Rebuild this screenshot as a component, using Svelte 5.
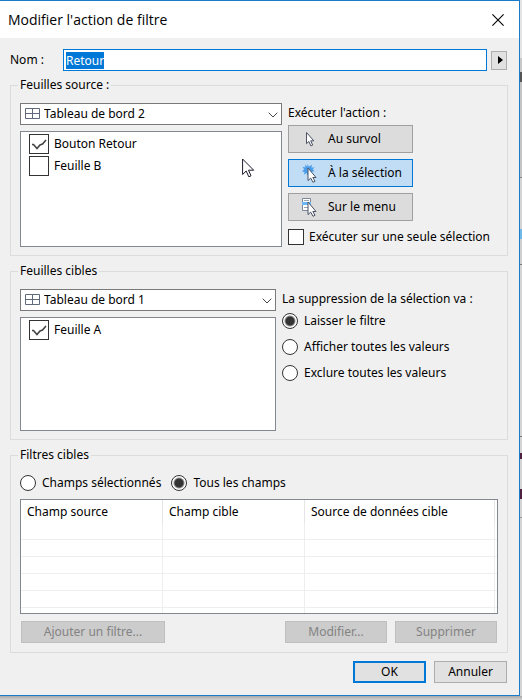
<script lang="ts">
    import { onMount } from "svelte";

    let name = "Retour";
    let sourceDashboard = "Tableau de bord 2";
    let targetDashboard = "Tableau de bord 1";
    let runOn = "select";
    let singleOnly = false;
    let clearing = "Laisser le filtre";
    let fieldMode = "Tous les champs";
    let nameInput: HTMLInputElement;

    let sourceSheets = [
        { label: "Bouton Retour", checked: true },
        { label: "Feuille B", checked: false },
    ];
    let targetSheets = [{ label: "Feuille A", checked: true }];

    const triggers = [
        { id: "hover", label: "Au survol" },
        { id: "select", label: "À la sélection" },
        { id: "menu", label: "Sur le menu" },
    ];
    const clearingOptions = [
        "Laisser le filtre",
        "Afficher toutes les valeurs",
        "Exclure toutes les valeurs",
    ];
    const fieldModes = ["Champs sélectionnés", "Tous les champs"];
    const emptyRows = [1, 2, 3, 4, 5, 6];

    onMount(() => {
        nameInput.focus();
        nameInput.select();
    });
</script>

{#snippet gridIcon()}
    <svg class="grid-icon" width="15" height="12" viewBox="0 0 15 12">
        <path d="M.5.5h14v10H.5zM7.5.5v10M.5 5.5h14" />
    </svg>
{/snippet}

{#snippet chevron()}
    <svg class="chevron" width="10" height="6" viewBox="0 0 10 6">
        <path d="M.7.7L5 5 9.3.7" />
    </svg>
{/snippet}

<div class="desktop">
    <main class="dialog">
        <header class="title-bar">
            <h1>Modifier l'action de filtre</h1>
            <button class="close" aria-label="Fermer">
                <svg width="12" height="12" viewBox="0 0 12 12">
                    <path d="M.4.4l11.2 11.2M11.6.4L.4 11.6" />
                </svg>
            </button>
        </header>

        <div class="body">
            <div class="name-row">
                <label for="name">Nom :</label>
                <input
                    id="name"
                    type="text"
                    bind:value={name}
                    bind:this={nameInput}
                />
                <button class="insert" aria-label="Insérer">
                    <svg width="5" height="8" viewBox="0 0 5 8">
                        <path d="M0 0l5 4-5 4z" />
                    </svg>
                </button>
            </div>

            <fieldset>
                <legend>Feuilles source :</legend>
                <div class="columns">
                    <div class="sheets">
                        <div class="combo">
                            {@render gridIcon()}
                            <select
                                aria-label="Source"
                                bind:value={sourceDashboard}
                            >
                                <option>Tableau de bord 1</option>
                                <option>Tableau de bord 2</option>
                            </select>
                            {@render chevron()}
                        </div>
                        <div class="list source-list">
                            {#each sourceSheets as sheet}
                                <label class="sheet">
                                    <input
                                        type="checkbox"
                                        bind:checked={sheet.checked}
                                    />
                                    {sheet.label}
                                </label>
                            {/each}
                            <svg
                                class="pointer"
                                width="13"
                                height="20"
                                viewBox="0 0 13 20"
                            >
                                <path
                                    d="M.6 1v15.5L4.2 13l2.6 5.8 2.2-1-2.5-5.6h5.2z"
                                />
                            </svg>
                        </div>
                    </div>

                    <div class="actions">
                        <span class="caption">Exécuter l'action :</span>
                        <div class="triggers">
                            {#each triggers as trigger}
                                <button
                                    class="trigger"
                                    class:active={runOn === trigger.id}
                                    aria-pressed={runOn === trigger.id}
                                    on:click={() => (runOn = trigger.id)}
                                >
                                    <svg
                                        width="16"
                                        height="20"
                                        viewBox="0 0 16 20"
                                    >
                                        {#if trigger.id === "hover"}
                                            <path
                                                class="arrow"
                                                d="M4.5 3.5v11.2l2.4-2.2 2 4.4 1.8-.8-2-4.3h3.1z"
                                            />
                                        {:else}
                                            {#if trigger.id === "select"}
                                                <path
                                                    class="burst"
                                                    d="M5.8 1l1 2.8L10 1.8l-.5 3 3-.6-1.8 2.4 2 1.6-2.7.6L8 12H5v-2l-3 1.4.6-2.2L0 8.2l2.2-1.6L.6 3.8l2.8.6L3 1.6l2.2 2.2z"
                                                />
                                            {:else}
                                                <path
                                                    class="menu"
                                                    d="M.5 1.5h8v12h-8z"
                                                />
                                                <path
                                                    class="menu-lines"
                                                    d="M2 3.5h5M2 10.5h5"
                                                />
                                                <path
                                                    class="menu-item"
                                                    d="M0 5h9v3H0z"
                                                />
                                            {/if}
                                            <path
                                                class="arrow"
                                                d="M6 5v12.6l2.7-2.5 2.3 4.2 2-1-2.2-3.8H14z"
                                            />
                                        {/if}
                                    </svg>
                                    {trigger.label}
                                </button>
                            {/each}
                        </div>
                        <label class="option single">
                            <input
                                type="checkbox"
                                bind:checked={singleOnly}
                            />
                            Exécuter sur une seule sélection
                        </label>
                    </div>
                </div>
            </fieldset>

            <fieldset>
                <legend>Feuilles cibles</legend>
                <div class="columns">
                    <div class="sheets">
                        <div class="combo">
                            {@render gridIcon()}
                            <select
                                aria-label="Cible"
                                bind:value={targetDashboard}
                            >
                                <option>Tableau de bord 1</option>
                                <option>Tableau de bord 2</option>
                            </select>
                            {@render chevron()}
                        </div>
                        <div class="list target-list">
                            {#each targetSheets as sheet}
                                <label class="sheet">
                                    <input
                                        type="checkbox"
                                        bind:checked={sheet.checked}
                                    />
                                    {sheet.label}
                                </label>
                            {/each}
                        </div>
                    </div>

                    <div class="clearing">
                        <span class="caption"
                            >La suppression de la sélection va :</span
                        >
                        {#each clearingOptions as option}
                            <label class="option">
                                <input
                                    type="radio"
                                    name="clearing"
                                    value={option}
                                    bind:group={clearing}
                                />
                                {option}
                            </label>
                        {/each}
                    </div>
                </div>
            </fieldset>

            <fieldset>
                <legend>Filtres cibles</legend>
                <div class="modes">
                    {#each fieldModes as mode}
                        <label class="option">
                            <input
                                type="radio"
                                name="fields"
                                value={mode}
                                bind:group={fieldMode}
                            />
                            {mode}
                        </label>
                    {/each}
                </div>
                <div class="table-box">
                    <table>
                        <thead>
                            <tr>
                                <th class="field">Champ source</th>
                                <th class="field">Champ cible</th>
                                <th>Source de données cible</th>
                                <th class="filler"></th>
                            </tr>
                        </thead>
                        <tbody>
                            {#each emptyRows as row (row)}
                                <tr><td></td><td></td><td></td><td></td></tr>
                            {/each}
                        </tbody>
                    </table>
                </div>
                <div class="filter-buttons">
                    <button class="btn add" disabled>Ajouter un filtre...</button>
                    <button class="btn edit" disabled>Modifier...</button>
                    <button class="btn edit" disabled>Supprimer</button>
                </div>
            </fieldset>

            <footer>
                <button class="btn default">OK</button>
                <button class="btn">Annuler</button>
            </footer>
        </div>
    </main>
    <!-- sliver of the window behind the dialog -->
    <div class="behind"></div>
</div>

<style>
    :global(body) {
        margin: 0;
        background: #c4c4c4;
    }

    .desktop {
        display: flex;
        box-sizing: border-box;
        min-height: 100vh;
        padding-bottom: 4px;
        background: linear-gradient(to top, #d0d0d0, #a8a8a8 4px);
        font-family: "Noto Sans", "DejaVu Sans Condensed", sans-serif;
        font-size: 12px;
        line-height: 20px;
        color: #000;
    }

    .dialog {
        flex: 1;
        min-width: 0;
        border: solid #1a7bc9;
        border-width: 1px 1px 1px 0;
        background: #f0f0f0;
    }

    .behind {
        width: 2px;
        background: linear-gradient(
            #e4e4e4 0 58px,
            #c8c8c8 58px 72px,
            #555 72px 82px,
            #c4c4c4 82px 177px,
            #888 177px 178px,
            #d4d4d4 178px 229px,
            #6fb8e8 229px 239px,
            #cfcfcf 239px 264px,
            #777 264px 265px,
            #d4d4d4 265px 436px,
            #777 436px 437px,
            #d4d4d4 437px 453px,
            #502040 453px 459px,
            #d4d4d4 459px 489px,
            #502040 489px 499px,
            #d4d4d4 499px 517px,
            #999 517px 518px,
            #d4d4d4 518px
        );
    }

    button,
    input,
    select {
        box-sizing: border-box;
        margin: 0;
        font: inherit;
        color: inherit;
    }

    .title-bar {
        display: flex;
        align-items: center;
        justify-content: space-between;
        height: 37px;
        padding: 0 10px 0 8px;
        background: #fff;
    }

    h1 {
        margin: 0;
        font: 14px/20px "Open Sans", "Noto Sans", sans-serif;
    }

    .close {
        display: flex;
        padding: 5px;
        border: 0;
        background: none;
    }

    .close path {
        stroke: #000;
        stroke-width: 1.1;
    }

    .body {
        padding: 11px 12px 12px 10px;
    }

    .name-row {
        display: flex;
        align-items: center;
        margin-bottom: 4px;
    }

    .name-row label {
        width: 53px;
    }

    .name-row input {
        flex: 1;
        min-width: 0;
        height: 22px;
        padding: 0 2px;
        border: 1px solid #0078d7;
        outline: 0;
        background: #fff;
    }

    .name-row input::selection {
        background: #0078d7;
        color: #fff;
    }

    .insert {
        display: flex;
        align-items: center;
        justify-content: center;
        width: 16px;
        height: 19px;
        margin-left: 4px;
        padding: 0 0 0 2px;
        border: 1px solid #adadad;
        background: #e1e1e1;
    }

    fieldset {
        min-width: 0;
        margin: 0 -1px 5px 0;
        padding: 8px 9px;
        border: 1px solid #dcdcdc;
    }

    legend {
        margin-left: -2px;
        padding: 0 2px;
    }

    .columns {
        display: flex;
        gap: 6px;
    }

    .sheets {
        flex: 1;
        min-width: 0;
    }

    .combo {
        position: relative;
        height: 22px;
        margin-bottom: 6px;
    }

    .combo select {
        appearance: none;
        width: 100%;
        height: 22px;
        padding: 0 22px 0 23px;
        border: 1px solid #7a7a7a;
        border-radius: 0;
        background: #fff;
    }

    .grid-icon,
    .chevron {
        position: absolute;
        top: 5px;
        left: 5px;
        fill: none;
        stroke: #5f6b7d;
        pointer-events: none;
    }

    .chevron {
        top: 9px;
        right: 4px;
        left: auto;
        stroke: #444;
    }

    .list {
        position: relative;
        box-sizing: border-box;
        padding: 2px 8px;
        border: 1px solid #828790;
        background: #fff;
    }

    .source-list {
        height: 116px;
    }

    .target-list {
        height: 114px;
    }

    .sheet {
        display: flex;
        gap: 5px;
        margin-bottom: 2px;
    }

    .pointer {
        position: absolute;
        top: 26px;
        left: 221px;
        fill: #fff;
        stroke: #1a1a2a;
    }

    input[type="checkbox"],
    input[type="radio"] {
        appearance: none;
        flex: none;
        width: 16px;
        height: 16px;
        border: 1px solid #333;
        background: #fff;
    }

    .sheet input[type="checkbox"] {
        width: 20px;
        height: 20px;
    }

    input[type="checkbox"]:checked {
        background: #fff
            url("data:image/svg+xml,%3Csvg xmlns='http://www.w3.org/2000/svg' viewBox='0 0 18 18'%3E%3Cpath d='M2 9.5h1.5L7 13.5l3-3.5 2.5-1L16 5' fill='none' stroke='%23444' stroke-width='1.6'/%3E%3C/svg%3E");
    }

    input[type="radio"] {
        border-radius: 50%;
    }

    input[type="radio"]:checked {
        background: radial-gradient(circle, #333 4px, #fff 6px);
    }

    .actions {
        width: 210px;
    }

    .clearing {
        width: 216px;
    }

    .caption {
        display: block;
    }

    .triggers {
        display: flex;
        flex-direction: column;
        gap: 6px;
        padding: 2px 0 6px;
    }

    .trigger {
        display: flex;
        align-items: center;
        gap: 10px;
        width: 125px;
        height: 28px;
        padding: 0 0 0 13px;
        border: 1px solid #a0a0a0;
        background: #dcdcdc;
        white-space: nowrap;
    }

    .trigger.active {
        border-color: #0078d7;
        background: #c0ddf5;
    }

    .arrow {
        fill: #fff;
        stroke: #4a5264;
    }

    .burst {
        fill: #4a9be8;
    }

    .menu {
        fill: #fff;
        stroke: #7c8798;
    }

    .menu-lines {
        stroke: #9aa3b0;
    }

    .menu-item {
        fill: #6cb8f5;
    }

    .option {
        display: flex;
        align-items: center;
        gap: 6px;
        white-space: nowrap;
    }

    .single {
        gap: 5px;
    }

    .clearing .option {
        margin-bottom: 6px;
    }

    .clearing .caption {
        margin-bottom: 2px;
    }

    .modes {
        display: flex;
        gap: 10px;
        margin-bottom: 6px;
    }

    .table-box {
        box-sizing: border-box;
        height: 115px;
        overflow: hidden;
        border: 1px solid #828790;
        background: #fff;
    }

    table {
        width: 100%;
        border-collapse: separate;
        border-spacing: 0;
        table-layout: fixed;
    }

    th,
    td {
        box-sizing: border-box;
        border-right: 1px solid #eee;
    }

    th {
        height: 23px;
        padding: 0 6px;
        border-color: #e5e5e5;
        font-weight: normal;
        text-align: left;
    }

    td {
        height: 17px;
        padding: 0;
        border-bottom: 1px solid #eee;
    }

    th.field {
        width: 142px;
    }

    th.filler {
        width: 2px;
        padding: 0;
    }

    th:last-child,
    td:last-child {
        border-right: 0;
    }

    .filter-buttons {
        display: flex;
        gap: 8px;
        padding: 7px 1px 1px;
    }

    .btn {
        width: 73px;
        height: 22px;
        padding: 0;
        border: 1px solid #adadad;
        background: #e1e1e1;
        line-height: 18px;
    }

    .btn:disabled {
        border-color: #bfbfbf;
        background: #ccc;
        color: #838383;
    }

    .btn.default {
        border: 2px solid #0078d7;
    }

    .add {
        width: 144px;
        margin-right: auto;
    }

    .edit {
        width: 102px;
    }

    footer {
        display: flex;
        justify-content: flex-end;
        gap: 8px;
        padding-top: 3px;
    }
</style>
